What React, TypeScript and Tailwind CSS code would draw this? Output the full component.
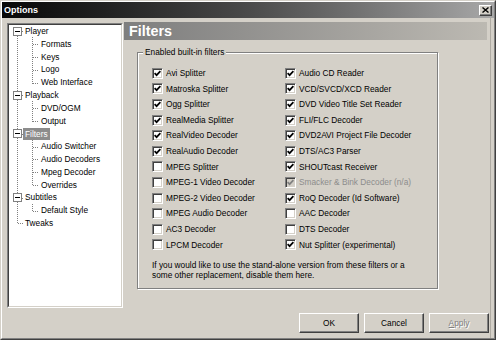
import React from "react";

type Item = { label: string; checked: boolean; disabled?: boolean };

const leftItems: Item[] = [
  { label: "Avi Splitter", checked: true },
  { label: "Matroska Splitter", checked: true },
  { label: "Ogg Splitter", checked: true },
  { label: "RealMedia Splitter", checked: true },
  { label: "RealVideo Decoder", checked: true },
  { label: "RealAudio Decoder", checked: true },
  { label: "MPEG Splitter", checked: false },
  { label: "MPEG-1 Video Decoder", checked: false },
  { label: "MPEG-2 Video Decoder", checked: false },
  { label: "MPEG Audio Decoder", checked: false },
  { label: "AC3 Decoder", checked: false },
  { label: "LPCM Decoder", checked: false },
];

const rightItems: Item[] = [
  { label: "Audio CD Reader", checked: true },
  { label: "VCD/SVCD/XCD Reader", checked: true },
  { label: "DVD Video Title Set Reader", checked: true },
  { label: "FLI/FLC Decoder", checked: true },
  { label: "DVD2AVI Project File Decoder", checked: true },
  { label: "DTS/AC3 Parser", checked: true },
  { label: "SHOUTcast Receiver", checked: true },
  { label: "Smacker & Bink Decoder (n/a)", checked: true, disabled: true },
  { label: "RoQ Decoder (Id Software)", checked: true },
  { label: "AAC Decoder", checked: false },
  { label: "DTS Decoder", checked: false },
  { label: "Nut Splitter (experimental)", checked: true },
];

type Node = { label: string; level: 0 | 1; box?: boolean; selected?: boolean };
const tree: Node[] = [
  { label: "Player", level: 0, box: true },
  { label: "Formats", level: 1 },
  { label: "Keys", level: 1 },
  { label: "Logo", level: 1 },
  { label: "Web Interface", level: 1 },
  { label: "Playback", level: 0, box: true },
  { label: "DVD/OGM", level: 1 },
  { label: "Output", level: 1 },
  { label: "Filters", level: 0, box: true, selected: true },
  { label: "Audio Switcher", level: 1 },
  { label: "Audio Decoders", level: 1 },
  { label: "Mpeg Decoder", level: 1 },
  { label: "Overrides", level: 1 },
  { label: "Subtitles", level: 0, box: true },
  { label: "Default Style", level: 1 },
  { label: "Tweaks", level: 0 },
];

const ROW = 12.8;
const cy = (i: number) => Math.round(ROW / 2 + ROW * i) + 0.5;

function TreeLines() {
  const lines: React.ReactNode[] = [];
  lines.push(<line key="rv" x1={8.5} y1={cy(0)} x2={8.5} y2={cy(15)} />);
  tree.forEach((n, i) => {
    if (n.level === 0) {
      lines.push(<line key={"rh" + i} x1={8.5} y1={cy(i)} x2={14} y2={cy(i)} />);
    } else {
      lines.push(<line key={"ch" + i} x1={23.5} y1={cy(i)} x2={29} y2={cy(i)} />);
    }
  });
  const groups: [number, number][] = [
    [0, 4],
    [5, 7],
    [8, 12],
    [13, 14],
  ];
  groups.forEach(([p, last]) => {
    lines.push(
      <line key={"cv" + p} x1={23.5} y1={cy(p) + 5} x2={23.5} y2={cy(last)} />
    );
  });
  return (
    <svg
      className="absolute left-0 top-0 pointer-events-none"
      width="112"
      height="210"
      stroke="#808080"
      strokeWidth="1"
      strokeDasharray="1 1"
      shapeRendering="crispEdges"
    >
      {lines}
    </svg>
  );
}

function Check({ checked, disabled }: { checked: boolean; disabled?: boolean }) {
  return (
    <div
      className={
        disabled
          ? "w-[11px] h-[11px] shrink-0 border border-t-[#808080] border-l-[#808080] border-r-white border-b-white shadow-[inset_1px_1px_0_#404040,inset_-1px_-1px_0_#d4d0c8] bg-[#d4d0c8] flex items-center justify-center"
          : "w-[11px] h-[11px] shrink-0 border border-t-[#808080] border-l-[#808080] border-r-white border-b-white shadow-[inset_1px_1px_0_#404040,inset_-1px_-1px_0_#d4d0c8] bg-white flex items-center justify-center"
      }
    >
      {checked && (
        <svg width="7" height="7" viewBox="0 0 7 7">
          <path
            d="M0.6 3.2 L2.6 5.2 L6.4 1.2"
            stroke={disabled ? "#808080" : "#000"}
            strokeWidth="1.7"
            fill="none"
          />
        </svg>
      )}
    </div>
  );
}

function CheckRow({ item }: { item: Item }) {
  return (
    <div className="flex items-center h-[15.6px]">
      <Check checked={item.checked} disabled={item.disabled} />
      <span
        className={
          item.disabled
            ? "ml-[3px] text-[#8c8c8c] whitespace-nowrap"
            : "ml-[3px] text-black whitespace-nowrap"
        }
      >
        {item.label}
      </span>
    </div>
  );
}

function Button({ children, disabled }: { children: React.ReactNode; disabled?: boolean }) {
  return (
    <div className="w-[60px] h-[20px] border border-t-white border-l-white border-r-[#404040] border-b-[#404040] shadow-[inset_-1px_-1px_0_#808080] bg-[#d4d0c8] flex items-center justify-center">
      <span
        className={
          disabled
            ? "text-[#808080] [text-shadow:1px_1px_0_#fff]"
            : "text-black"
        }
      >
        {children}
      </span>
    </div>
  );
}

export default function App() {
  return (
    <div className="w-[496px] h-[340px] bg-[#d4d0c8] font-['Liberation_Sans',Arial,sans-serif] text-[8.3px] leading-[10.4px] border border-t-[#d4d0c8] border-l-[#d4d0c8] border-r-[#404040] border-b-[#404040] overflow-hidden">
      <div className="w-full h-full border border-t-white border-l-white border-r-[#808080] border-b-[#808080] flex flex-col">
        {/* Title bar */}
        <div className="h-[16px] shrink-0 bg-linear-to-r from-[#080808] via-[#4a4a4a] to-[#a8a8a8] flex items-center pl-[2px] pr-[2px]">
          <span className="text-white font-bold text-[9px] leading-[16px]">Options</span>
          <div className="ml-auto w-[13px] h-[11px] bg-[#d4d0c8] border border-t-white border-l-white border-r-[#404040] border-b-[#404040] shadow-[inset_-1px_-1px_0_#808080] flex items-center justify-center">
            <svg width="7" height="6" viewBox="0 0 7 6">
              <path d="M0.5 0.5 L6.5 5.5 M6.5 0.5 L0.5 5.5" stroke="#000" strokeWidth="1.4" fill="none" />
            </svg>
          </div>
        </div>

        {/* Body */}
        <div className="flex-1 flex flex-col mr-[3px] border-r border-r-[#aeaaa2]">
          <div className="flex">
            {/* Tree */}
            <div className="ml-[5px] mt-[5px] w-[116px] h-[285px] border border-t-[#808080] border-l-[#808080] border-r-white border-b-white shrink-0">
              <div className="w-full h-full border border-t-[#404040] border-l-[#404040] border-r-[#d4d0c8] border-b-[#d4d0c8] bg-white relative">
                <TreeLines />
                <div className="relative flex flex-col">
                  {tree.map((n, i) => (
                    <div key={i} className="h-[12.8px] flex items-center leading-[12.8px]">
                      {n.level === 0 ? (
                        n.box ? (
                          <div className="ml-[4px] w-[9px] h-[9px] border border-[#808080] bg-white flex items-center justify-center shrink-0">
                            <div className="w-[5px] h-[1px] bg-black" />
                          </div>
                        ) : (
                          <div className="w-[13px] shrink-0" />
                        )
                      ) : (
                        <div className="w-[29px] shrink-0" />
                      )}
                      <span
                        className={
                          n.selected
                            ? "ml-[1px] px-[2px] h-[12px] leading-[12px] bg-[#8c8c8c] text-white whitespace-nowrap"
                            : "ml-[1px] px-[2px] text-black whitespace-nowrap"
                        }
                      >
                        {n.label}
                      </span>
                    </div>
                  ))}
                </div>
              </div>
            </div>

            {/* Right page */}
            <div className="ml-[1px] flex-1 flex flex-col">
              <div className="mt-[4px] h-[18px] w-[363px] bg-linear-to-r from-[#7e7e7e] to-[#bcb9b2] flex items-center pl-[5px]">
                <span className="text-white font-bold text-[14.3px] leading-[18px]">Filters</span>
              </div>

              <div className="relative mt-[12px] ml-[13px] w-[301px] h-[237px] border border-[#808080] shadow-[inset_1px_1px_0_#fff,1px_1px_0_#fff]">
                <span className="absolute left-[5px] top-[-6px] px-[2px] bg-[#d4d0c8] leading-[10px] whitespace-nowrap">
                  Enabled built-in filters
                </span>
                <div className="pt-[12.5px] pl-[14px] flex">
                  <div className="w-[133px] flex flex-col">
                    {leftItems.map((it) => (
                      <CheckRow key={it.label} item={it} />
                    ))}
                  </div>
                  <div className="flex flex-col">
                    {rightItems.map((it) => (
                      <CheckRow key={it.label} item={it} />
                    ))}
                  </div>
                </div>
                <p className="pl-[14px] mt-[7px] leading-[10.4px] text-black">
                  If you would like to use the stand-alone version from these filters or a
                  <br />
                  some other replacement, disable them here.
                </p>
              </div>
            </div>
          </div>

          {/* Buttons */}
          <div className="mt-[5px] flex justify-end gap-[5px] pr-[1px]">
            <Button>OK</Button>
            <Button>Cancel</Button>
            <Button disabled>
              <span className="underline">A</span>pply
            </Button>
          </div>
        </div>
      </div>
    </div>
  );
}
